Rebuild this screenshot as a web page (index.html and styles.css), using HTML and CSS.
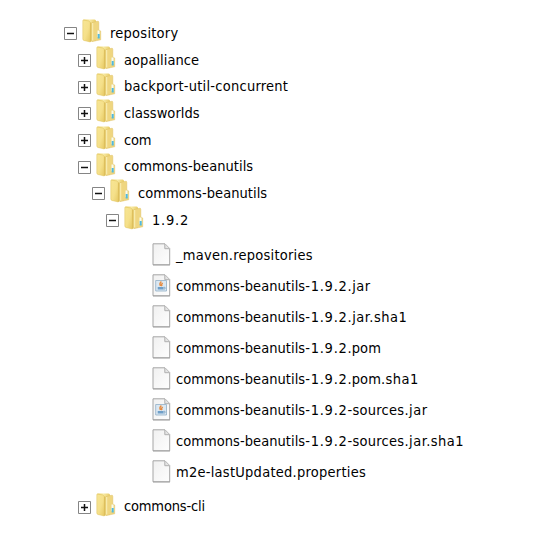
FILE: index.html
```
<!DOCTYPE html>
<html lang="en">
<head>
<meta charset="utf-8">
<title>Repository</title>
<link rel="stylesheet" href="styles.css">
</head>
<body>
<svg class="defs" width="0" height="0" aria-hidden="true">
  <defs>
    <linearGradient id="back" x1="0" y1="0" x2="1" y2="0"><stop offset="0" stop-color="#e8c955"/><stop offset=".5" stop-color="#f8eaa4"/><stop offset="1" stop-color="#e8cb66"/></linearGradient>
    <linearGradient id="front" x1="0" y1="0" x2="1" y2="1"><stop offset="0" stop-color="#f7e594"/><stop offset=".55" stop-color="#f5e08a"/><stop offset="1" stop-color="#e6c963"/></linearGradient>
    <linearGradient id="paper" x1="0" y1="0" x2="1" y2="1"><stop offset="0" stop-color="#f0f0f0"/><stop offset="1" stop-color="#fefefe"/></linearGradient>
    <symbol id="folder" viewBox="0 0 20 24">
      <path d="M1 1.5Q1 .5 2 .5H12.5Q14 .5 14 2V22L8 22.5 1 21Z" fill="url(#back)"/>
      <path d="M10 3.5L15.5 2.3Q16.8 2 16.8 3.3V11L18.7 12V20.8L10 22.5Z" fill="#efd680" stroke="#dfc065" stroke-width=".5"/>
      <path d="M1 1L6.8 2Q8.3 2.4 8.3 4V23L2 21.5Q.8 21.2.8 20V2Z" fill="url(#front)" stroke="#e1c560" stroke-width=".5"/>
      <path d="M8.8 3.5V22.7" stroke="#d2ad43" stroke-width=".8"/>
      <path d="M10.7 4V21.5" stroke="#fbf0b8" stroke-width="1"/>
      <path d="M15.5 11.5H17.5V18H15.5Z" fill="#f7fbef"/>
      <path d="M15.7 15H17.7V19.5H15.7Z" fill="#50b9df"/>
    </symbol>
    <symbol id="file" viewBox="0 0 19 23">
      <path d="M1 .8H13L17.7 5.5V21.8H1Z" fill="url(#paper)" stroke="#a5a5a5"/>
      <path d="M12.8 1V5.7H17.5" fill="#e4e4e4" stroke="#b0b0b0"/>
      <path d="M1 22H18" stroke="#8e8e8e" stroke-width=".6"/>
    </symbol>
    <symbol id="jar" viewBox="0 0 19 23">
      <use href="#file" width="19" height="23"/>
      <path d="M3.7 6.5H14.5V17H3.7Z" fill="#dbe8f2" stroke="#91afc6" stroke-width=".8"/>
      <path d="M5.7 13H11.5V15.5H5.7Z" fill="#6f9fc8"/>
      <path d="M11.5 13.3H13V15H11.5" fill="none" stroke="#7fa5c5" stroke-width=".8"/>
      <path d="M9.4 7.5Q7 9.5 8.5 12M10.7 9Q8.8 10.5 10 12.2" fill="none" stroke="#e58b42" stroke-width="1.4"/>
    </symbol>
    <symbol id="minus" viewBox="0 0 13 13"><path d="M.5.5H12.5V12.5H.5Z" fill="#fff" stroke="#858585"/><path d="M3 6.5H10" stroke="#111" stroke-width="1.5"/></symbol>
    <symbol id="plus" viewBox="0 0 13 13"><path d="M.5.5H12.5V12.5H.5Z" fill="#fff" stroke="#858585"/><path d="M3 6.5H10M6.5 3V10" stroke="#111" stroke-width="1.5"/></symbol>
  </defs>
</svg>
<main class="tree">
  <div class="row"><svg class="toggle"><use href="#minus"/></svg><svg class="folder"><use href="#folder"/></svg><span class="label wide">repository</span></div>
  <div class="children">
    <div class="row"><svg class="toggle"><use href="#plus"/></svg><svg class="folder"><use href="#folder"/></svg><span class="label">aopalliance</span></div>
    <div class="row"><svg class="toggle"><use href="#plus"/></svg><svg class="folder"><use href="#folder"/></svg><span class="label wide">backport-util-concurrent</span></div>
    <div class="row"><svg class="toggle"><use href="#plus"/></svg><svg class="folder"><use href="#folder"/></svg><span class="label">classworlds</span></div>
    <div class="row"><svg class="toggle"><use href="#plus"/></svg><svg class="folder"><use href="#folder"/></svg><span class="label tight">com</span></div>
    <div class="row"><svg class="toggle"><use href="#minus"/></svg><svg class="folder"><use href="#folder"/></svg><span class="label">commons-beanutils</span></div>
    <div class="children">
      <div class="row"><svg class="toggle"><use href="#minus"/></svg><svg class="folder"><use href="#folder"/></svg><span class="label">commons-beanutils</span></div>
      <div class="children">
        <div class="row"><svg class="toggle"><use href="#minus"/></svg><svg class="folder"><use href="#folder"/></svg><span class="label version">1.9.2</span></div>
        <div class="files">
          <div class="item"><svg class="file"><use href="#file"/></svg><span class="label wide">_maven.repositories</span></div>
          <div class="item"><svg class="file"><use href="#jar"/></svg><span class="label">commons-beanutils<span class="version">-1.9.2</span><span class="ext">.jar</span></span></div>
          <div class="item"><svg class="file"><use href="#file"/></svg><span class="label">commons-beanutils<span class="version">-1.9.2</span><span class="ext">.jar.sha1</span></span></div>
          <div class="item"><svg class="file"><use href="#file"/></svg><span class="label">commons-beanutils<span class="version">-1.9.2</span>.pom</span></div>
          <div class="item"><svg class="file"><use href="#file"/></svg><span class="label">commons-beanutils<span class="version">-1.9.2</span>.pom<span class="ext">.sha1</span></span></div>
          <div class="item"><svg class="file"><use href="#jar"/></svg><span class="label">commons-beanutils<span class="version">-1.9.2</span><span class="wide">-sources</span><span class="ext">.jar</span></span></div>
          <div class="item"><svg class="file"><use href="#file"/></svg><span class="label">commons-beanutils<span class="version">-1.9.2</span><span class="wide">-sources</span><span class="ext">.jar.sha1</span></span></div>
          <div class="item"><svg class="file"><use href="#file"/></svg><span class="label wide">m2e-lastUpdated.properties</span></div>
        </div>
      </div>
    </div>
    <div class="row"><svg class="toggle"><use href="#plus"/></svg><svg class="folder"><use href="#folder"/></svg><span class="label tight">commons-cli</span></div>
  </div>
</main>
</body>
</html>
```
FILE: styles.css
```
body {
  margin: 0;
  background: #fff;
  color: #000;
  font: 14.5px/20px "DejaVu Sans Condensed", "DejaVu Sans", sans-serif;
  font-stretch: condensed;
}
.defs { display: block; }
.tree { padding: 18px 0 0 64px; }
.children { padding-left: 14px; }
.row {
  display: flex;
  align-items: center;
  height: 26.7px;
  white-space: nowrap;
}
.label { padding-top: 3px; letter-spacing: 0.05px; }
.tight { letter-spacing: -0.17px; }
.wide { letter-spacing: 0.25px; }
.ext { letter-spacing: 0.5px; }
.version { letter-spacing: 0.75px; }
.toggle {
  flex: none;
  width: 13px;
  height: 13px;
  margin: 5px 5px 0 0;
}
.folder {
  flex: none;
  width: 20px;
  height: 24px;
  margin-right: 8px;
}
.files { padding: 7px 0 5px 60px; margin-left: -14px; }
.item {
  display: flex;
  align-items: center;
  height: 31px;
  white-space: nowrap;
}
.item .label { padding-top: 2px; }
.file {
  flex: none;
  width: 19px;
  height: 23px;
  margin-right: 5px;
}
```
